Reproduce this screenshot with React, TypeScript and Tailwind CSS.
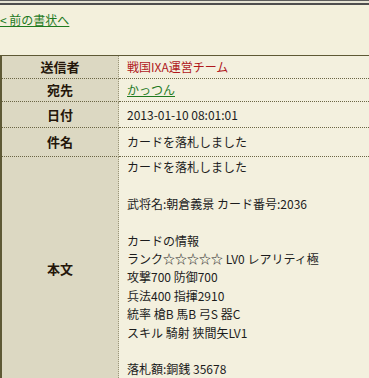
const font = { fontFamily: '"MS PGothic", "Noto Sans CJK JP", sans-serif' };

const rows: { label: string; h: string; value: React.ReactNode }[] = [
  { label: "送信者", h: "h-[23px]", value: <span className="text-[#b0181c]">戦国IXA運営チーム</span> },
  { label: "宛先", h: "h-[23px]", value: <a href="#" className="text-[#1e7a1e] underline">かっつん</a> },
  { label: "日付", h: "h-[26px]", value: <span>2013-01-10 08:01:01</span> },
  { label: "件名", h: "h-[29px]", value: <span>カードを落札しました</span> },
];

const body = [
  "カードを落札しました",
  "",
  "武将名:朝倉義景 カード番号:2036",
  "",
  "カードの情報",
  "ランク☆☆☆☆☆ LV0 レアリティ極",
  "攻撃700 防御700",
  "兵法400 指揮2910",
  "統率 槍B 馬B 弓S 器C",
  "スキル 騎射 狭間矢LV1",
  "",
  "落札額:銅銭 35678",
];

export default function App() {
  return (
    <div className="h-[378px] w-[369px] overflow-hidden bg-[#f3f0dc] text-[12px] text-[#1c1c1c]" style={font}>
      <div className="h-px bg-[#5c5c5c]" />
      <div className="h-[2px] bg-[#e6e4d4]" />
      <div className="h-[2px] bg-[#4e4e4e]" />
      <div className="pt-[6px]">
        <a href="#" className="text-[#1e7a1e] underline leading-[14px]">&lt; 前の書状へ</a>
      </div>
      <div className="mt-[26px] border-t border-l-2 border-[#5e5935]">
        {rows.map((r) => (
          <div key={r.label} className={`flex ${r.h}`}>
            <div className="flex w-[117px] shrink-0 items-center justify-center border-r border-b border-r-[#9a9578] border-b-[#6b6645] border-dotted bg-[#dcd8c2] font-bold text-[13px] text-[#24160a]">
              {r.label}
            </div>
            <div className="flex flex-1 items-center border-b border-dotted border-[#6b6645] pl-[8px] bg-[#f3f0de]">
              {r.value}
            </div>
          </div>
        ))}
        <div className="flex h-[225px]">
          <div className="flex w-[117px] shrink-0 items-center justify-center border-r border-b border-r-[#9a9578] border-b-[#6b6645] border-dotted bg-[#dcd8c2] font-bold text-[13px] text-[#24160a]">
            本文
          </div>
          <div className="flex-1 border-b border-[#5e5935] bg-[#f3f0de] pl-[8px] pt-[1px] leading-[18.4px]">
            {body.map((l, i) => (
              <div key={i} className="h-[18.4px] whitespace-pre">{l}</div>
            ))}
          </div>
        </div>
      </div>
    </div>
  );
}
